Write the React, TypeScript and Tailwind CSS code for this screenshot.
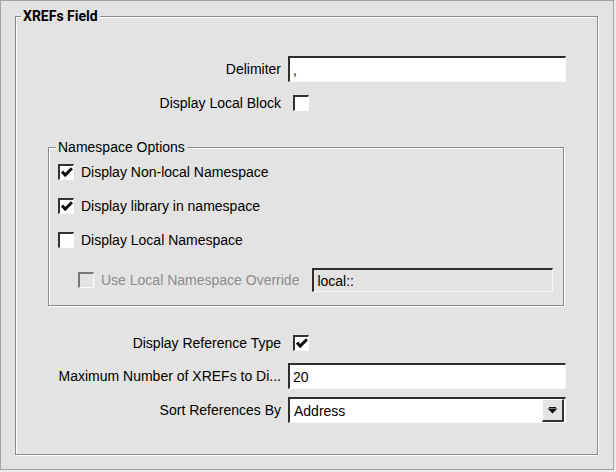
import React from 'react';

const font = "font-['Liberation_Sans',Arial,sans-serif]";

function Check({ checked = false, disabled = false }: { checked?: boolean; disabled?: boolean }) {
  return (
    <span
      className={
        'flex h-[16px] w-[16px] shrink-0 items-center justify-center border-t-2 border-l-2 border-b border-r border-b-[#fbfbfb] border-r-[#fbfbfb] ' +
        (disabled ? 'border-t-[#777] border-l-[#777] bg-[#e3e3e3]' : 'border-t-[#333] border-l-[#333] bg-white')
      }
    >
      {checked && (
        <svg width="12" height="11" viewBox="0 0 12 11">
          <path d="M1 4.6 L4.2 8 L11 1.2" stroke="#111" strokeWidth="3" fill="none" />
        </svg>
      )}
    </span>
  );
}

function TextBox({ value, className = '', disabled = false }: { value: string; className?: string; disabled?: boolean }) {
  return (
    <div
      className={
        'flex items-center border-t-2 border-l-2 border-t-[#2e2e2e] border-l-[#2e2e2e] border-b border-r border-b-[#f6f6f6] border-r-[#f6f6f6] pl-[3px] text-[14px] text-black ' +
        (disabled ? 'bg-[#e3e3e3] ' : 'bg-white ') +
        className
      }
    >
      {value}
    </div>
  );
}

function Row({ label, children }: { label: string; children: React.ReactNode }) {
  return (
    <div className="flex items-center">
      <span className="w-[265px] shrink-0 text-right text-[14px] text-black whitespace-nowrap">{label}</span>
      <div className="ml-[7px] flex items-center">{children}</div>
    </div>
  );
}

function CheckRow({ label, checked }: { label: string; checked?: boolean }) {
  return (
    <div className="flex h-[16px] items-center">
      <Check checked={checked} />
      <span className="ml-[7px] text-[14px] text-black">{label}</span>
    </div>
  );
}

export default function App() {
  return (
    <div className={`h-[472px] w-[616px] bg-[#ececec] leading-[16px] ${font}`}>
      <div className="h-[470px] w-[614px] border border-[#a4a4a4] bg-[#e3e3e3]">
        <fieldset className="ml-[14px] mt-[7px] h-[447px] w-[583px] border border-[#8a8a8a] shadow-[1px_1px_0_#fff,inset_1px_1px_0_#fff]">
          <legend className="ml-[5px] bg-[#e3e3e3] px-[2px] font-['Roboto',sans-serif] text-[14px] leading-[16px] font-bold text-black">
            XREFs Field
          </legend>

          <div className="mt-[32px] flex flex-col">
            <Row label="Delimiter">
              <TextBox value="," className="h-[26px] w-[278px]" />
            </Row>

            <div className="mt-[13px]">
              <Row label="Display Local Block">
                <div className="ml-[5px]">
                  <Check />
                </div>
              </Row>
            </div>

            <fieldset className="ml-[32px] mt-[28px] h-[167px] w-[516px] border border-[#8a8a8a] shadow-[1px_1px_0_#fff,inset_1px_1px_0_#fff]">
              <legend className="ml-[7px] bg-[#e3e3e3] px-[2px] text-[14px] leading-[16px] text-black">
                Namespace Options
              </legend>
              <div className="ml-[9px] mt-[9px] flex flex-col gap-[18px]">
                <CheckRow label="Display Non-local Namespace" checked />
                <CheckRow label="Display library in namespace" checked />
                <CheckRow label="Display Local Namespace" />
              </div>
              <div className="ml-[29px] mt-[20px] flex items-center">
                <Check disabled />
                <span className="ml-[7px] text-[14px] text-[#8c8c8c]">Use Local Namespace Override</span>
                <TextBox value="local::" disabled className="ml-[13px] h-[24px] w-[241px]" />
              </div>
            </fieldset>

            <div className="mt-[29px]">
              <Row label="Display Reference Type">
                <div className="ml-[5px]">
                  <Check checked />
                </div>
              </Row>
            </div>

            <div className="mt-[12px]">
              <Row label="Maximum Number of XREFs to Di...">
                <TextBox value="20" className="h-[26px] w-[278px]" />
              </Row>
            </div>

            <div className="mt-[8px]">
              <Row label="Sort References By">
                <div className="flex h-[26px] w-[278px] items-center border-t-2 border-l-2 border-t-[#2e2e2e] border-l-[#2e2e2e] border-b border-r border-b-[#f6f6f6] border-r-[#f6f6f6] bg-white">
                  <span className="flex-1 pl-[4px] text-[14px] text-black">Address</span>
                  <span className="mr-[1px] flex h-[23px] w-[22px] items-center justify-center border-t border-l border-t-[#fff] border-l-[#fff] border-b-2 border-r-2 border-b-[#333] border-r-[#333] bg-[#e3e3e3]">
                    <svg width="11" height="7" viewBox="0 0 11 7">
                      <path d="M0.5 1.5 H10.5 L5.5 6.5 Z" fill="#111" />
                      <rect x="2" y="0" width="7" height="1" fill="#111" />
                    </svg>
                  </span>
                </div>
              </Row>
            </div>
          </div>
        </fieldset>
      </div>
    </div>
  );
}
